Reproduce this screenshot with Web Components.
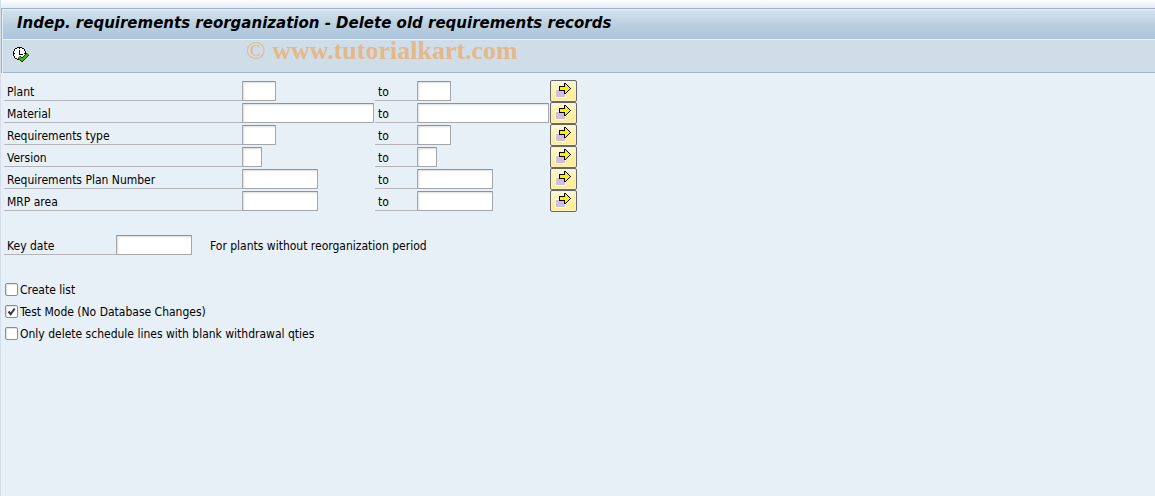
<!DOCTYPE html>
<html lang="en">
<head>
<meta charset="utf-8">
<title>Indep. requirements reorganization</title>
<style>
html, body { margin: 0; min-height: 100%; }
body { background: #e8f0f7; color: #000; font: 12px/20px "DejaVu Sans Condensed", "DejaVu Sans", sans-serif; }
</style>
</head>
<body>
<report-screen></report-screen>
<script>
const define = (name, html, setup) => customElements.define(name, class extends HTMLElement {
  connectedCallback() {
    if (this.shadowRoot) return;
    const root = this.attachShadow({ mode: "open" });
    const t = document.createElement("template");
    t.innerHTML = html;
    root.append(t.content.cloneNode(true));
    if (setup) setup(this, root);
  }
});

const fieldStyle = `
  input { box-sizing: border-box; height: 20px; margin: 0; padding: 0 3px; border: 1px solid #a3a6aa; border-top-color: #8f9397; border-radius: 1px;
    background: #fff; box-shadow: inset 1px 1px 2px #dcdcdc; font: inherit; outline-offset: -1px; }
  input.s { width: 20px; } input.m { width: 34px; } input.l { width: 76px; } input.xl { width: 132px; }
  label { box-sizing: border-box; height: 20px; padding: 1px 0 0 3px; border-bottom: 1px solid #b3b5b8; white-space: nowrap; }
`;

define("title-bar", `<style>
  :host { display: block; padding: 0 14px; border-bottom: 1px solid #eaf4fb; background: linear-gradient(#d3e2ee, #b9cfdd 55%, #abc3dd); }
  h1 { margin: 0; font: italic bold 15px/26px "DejaVu Sans", sans-serif; padding-bottom: 3px; }
</style><h1><slot></slot></h1>`);

define("execute-button", `<style>
  :host { display: block; }
  button { display: block; margin: 0; padding: 0; border: 0; background: none; }
  svg { display: block; }
</style><button type="button" aria-label="Execute"><svg width="17" height="17" viewBox="0 0 17 17" shape-rendering="crispEdges">
  <path fill="#000" d="M4 0h5v1h2v1h1v2h1v5h-1v2h-1v1h-2v1h-5v-1h-2v-1h-1v-2h-1v-5h1v-2h1v-1h2z"/>
  <path fill="#fff" d="M4 1h5v1h2v2h1v5h-1v2h-2v1h-5v-1h-2v-2h-1v-5h1v-2h2z"/>
  <path fill="#000" d="M6 3h1v4h3v1h-4zM6 1h1v1h-1zM1 6h1v1h-1zM11 6h1v1h-1zM6 11h1v1h-1z"/>
  <path fill="none" stroke="#0c3a08" stroke-width="4" d="M6 10l3 3l6-6"/>
  <path fill="none" stroke="#4fae20" stroke-width="2" d="M6 10l3 3l6-6"/>
</svg></button>`);

define("tool-bar", `<style>
  :host { display: flex; align-items: flex-start; min-height: 32px; padding-left: 10px; border-bottom: 1px solid #a0b4cb; background: #cfdde8; }
  execute-button { padding-top: 7px; }
  .mark { margin-left: 216px; color: #e4b888; font: bold 26px/22px "Liberation Serif", serif; white-space: nowrap; }
  .mark span { font-weight: normal; }
</style><execute-button></execute-button><div class="mark"><span>©</span> www.tutorialkart.com</div>`);

define("more-button", `<style>
  :host { display: block; }
  button { display: block; box-sizing: border-box; width: 27px; height: 22px; margin: 0; padding: 2px 6px 2px 4px; border: 1px solid #66686c; border-radius: 2px;
    background: linear-gradient(#fff9d6, #ffeea0 60%, #fdeb98); box-shadow: inset 0 0 0 1px #fff3b8; }
  svg { display: block; }
</style><button type="button" aria-label="Multiple selection"><svg width="16" height="16" viewBox="0 0 16 16" shape-rendering="crispEdges">
  <path fill="#fff" d="M0 6h11v9h-11z"/><path fill="#d3bddc" d="M1 7h9v7h-9z"/>
  <path fill="#000" d="M9 0h2v1h1v1h1v1h1v1h1v1h1v1h-1v1h-1v1h-1v1h-1v1h-1v1h-2v-3h-5v-5h5z"/>
  <path fill="#ffec00" d="M10 1h1v1h1v1h1v1h1v1h1v1h-1v1h-1v1h-1v1h-1v1h-1v-3h-5v-3h5z"/>
</svg></button>`);

define("range-row", `<style>
  :host { display: grid; grid-template-columns: 238px 133px 42px 133px 27px; align-items: center; height: 22px; }
  ${fieldStyle}
</style><label for="low"></label><input id="low"><label for="high">to</label><input id="high"><more-button></more-button>`,
(host, root) => {
  root.querySelector("label").textContent = host.getAttribute("label");
  root.querySelectorAll("input").forEach(i => i.className = host.getAttribute("size"));
});

define("date-row", `<style>
  :host { display: grid; grid-template-columns: 112px 94px auto; align-items: center; height: 22px; }
  ${fieldStyle}
  span { padding-top: 2px; }
</style><label for="date">Key date</label><input id="date" class="l"><span><slot></slot></span>`);

define("check-row", `<style>
  :host { display: flex; height: 22px; }
  label { display: flex; align-items: center; gap: 2px; padding-left: 1px; white-space: nowrap; }
  span { padding-top: 2px; }
  input { appearance: none; box-sizing: border-box; width: 13px; height: 13px; margin: 0; border: 1px solid #8b8e92; border-radius: 2px; background: #fff; box-shadow: inset 1px 1px 1px #e2e2e2; }
  input:checked { background: #fff url('data:image/svg+xml,<svg xmlns="http://www.w3.org/2000/svg" viewBox="0 0 11 11"><path d="M2.5 5.5L4.7 8.2L8.7 2.5" fill="none" stroke="%23303048" stroke-width="2"/></svg>'); }
</style><label><input type="checkbox"><span><slot></slot></span></label>`,
(host, root) => { root.querySelector("input").checked = host.hasAttribute("checked"); });

define("report-screen", `<style>
  :host { display: block; box-sizing: border-box; min-height: 100vh; border-left: 1px solid #d5dde9; }
  .strip { height: 8px; background: linear-gradient(#fbfcfe, #e6edf5); }
  header { border: solid #9db1c6; border-width: 1px 0 0 1px; }
  .edge { border: solid #e4eff8; border-width: 1px 0 0 1px; }
  main { padding: 7px 3px; }
  section { margin-bottom: 22px; }
</style>
<div class="strip"></div>
<header><div class="edge"><title-bar>Indep. requirements reorganization - Delete old requirements records</title-bar><tool-bar></tool-bar></div></header>
<main>
  <section>
    <range-row label="Plant" size="m"></range-row>
    <range-row label="Material" size="xl"></range-row>
    <range-row label="Requirements type" size="m"></range-row>
    <range-row label="Version" size="s"></range-row>
    <range-row label="Requirements Plan Number" size="l"></range-row>
    <range-row label="MRP area" size="l"></range-row>
  </section>
  <section><date-row>For plants without reorganization period</date-row></section>
  <section>
    <check-row>Create list</check-row>
    <check-row checked>Test Mode (No Database Changes)</check-row>
    <check-row>Only delete schedule lines with blank withdrawal qties</check-row>
  </section>
</main>`);
</script>
</body>
</html>
